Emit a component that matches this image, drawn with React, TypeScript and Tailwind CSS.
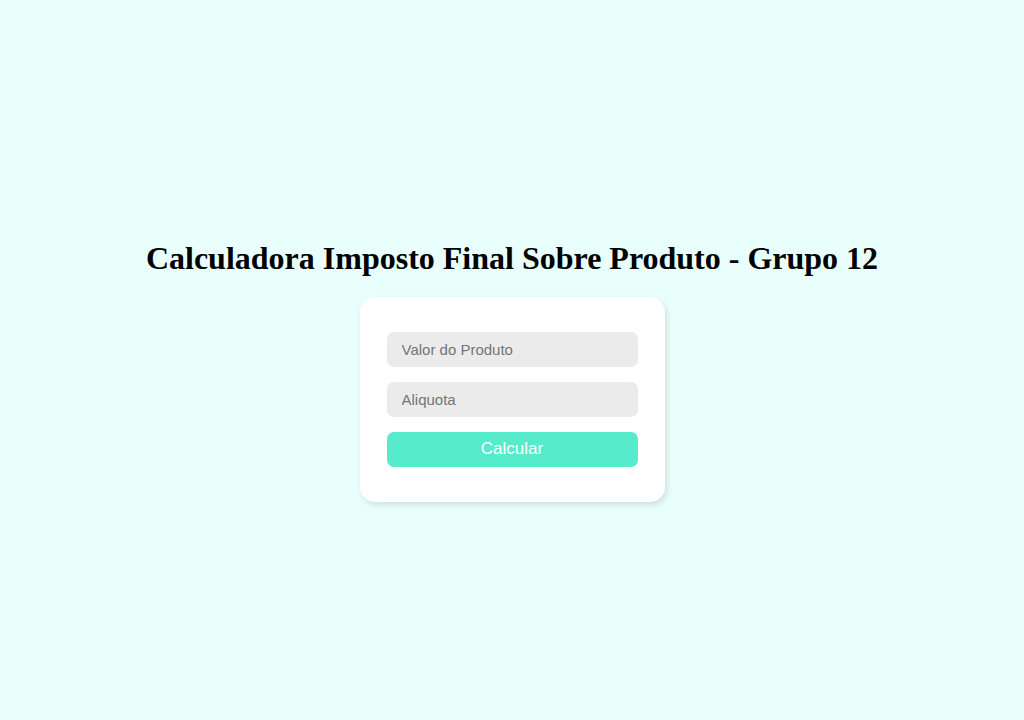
export default function App() {
  return (
    <div className="min-h-screen w-full bg-[#e9fffc] flex flex-col items-center justify-center">
      <h1 className="my-[15px] text-[32px] font-bold leading-normal text-black font-['Liberation_Serif','Times_New_Roman',serif]">
        Calculadora Imposto Final Sobre Produto - Grupo 12
      </h1>
      <div className="w-[305px] rounded-[15px] bg-white px-[27px] py-[35px] shadow-[2px_3px_6px_rgba(0,0,0,0.12)] flex flex-col gap-[15px] font-['Liberation_Sans',Arial,sans-serif]">
        <input
          type="text"
          placeholder="Valor do Produto"
          className="h-[35px] w-full rounded-[7px] bg-[#ebebeb] px-[15px] text-[15px] text-black placeholder:text-[#757575] outline-none"
        />
        <input
          type="text"
          placeholder="Aliquota"
          className="h-[35px] w-full rounded-[7px] bg-[#ebebeb] px-[15px] text-[15px] text-black placeholder:text-[#757575] outline-none"
        />
        <button className="h-[35px] w-full rounded-[7px] bg-[#55ebcb] text-[17px] text-white">
          Calcular
        </button>
      </div>
    </div>
  );
}
